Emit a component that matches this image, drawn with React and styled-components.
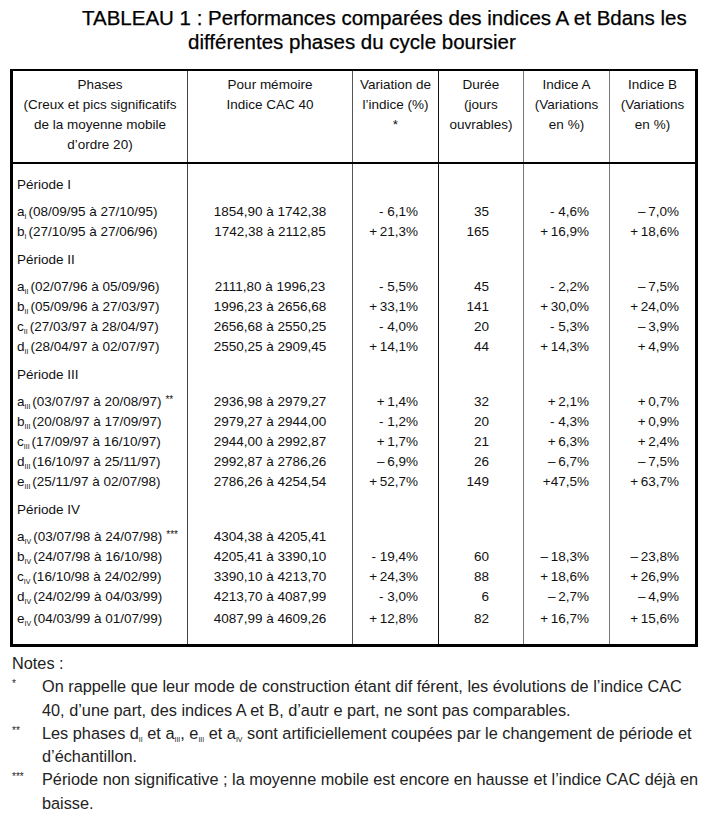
import React from "react";
import styled, { createGlobalStyle } from "styled-components";

const Global = createGlobalStyle`
  html, body { margin: 0; padding: 0; background: #fff; }
  body { font-family: "Liberation Sans", Arial, Helvetica, sans-serif; color: #111; }
`;

const Page = styled.div`
  width: 706px;
  box-sizing: border-box;
  padding: 6px 0 0 10px;
`;

const Title = styled.h1`
  margin: 0 0 15px 0;
  font-size: 20.5px;
  font-weight: normal;
  line-height: 24px;
  color: #000;
  white-space: nowrap;
  -webkit-text-stroke: 0.25px #000;
`;

const TitleLine = styled.span`
  display: block;
  margin-left: ${(p) => p.$indent}px;
`;

const Table = styled.table`
  width: 685px;
  table-layout: fixed;
  border-collapse: collapse;
  border-top: 2px solid #000;
  border-left: 3px solid #000;
  border-right: 3px solid #000;
  border-bottom: 3px solid #000;
  font-size: 13.5px;
  color: #111;
`;

const Col = styled.col`
  width: ${(p) => p.$w}px;
`;

const lineColors = ["#000", "#444", "#555", "#111", "#777", "#777"];

const Th = styled.th`
  font-weight: normal;
  text-align: center;
  vertical-align: top;
  line-height: 20px;
  padding: 4px 2px 7px;
  border-bottom: 2px solid #000;
  border-left: ${(p) => (p.$i === 0 ? "3px solid #000" : `1px solid ${lineColors[p.$i]}`)};
  white-space: nowrap;
`;

const Td = styled.td`
  height: ${(p) => (p.$last ? "auto" : "20px")};
  line-height: 20px;
  padding: ${(p) => (p.$last ? 2 : 0)}px ${(p) => p.$pr || 0}px ${(p) => (p.$last ? 15 : 0)}px ${(p) => p.$pl || 0}px;
  text-align: ${(p) => p.$align || "left"};
  border-left: ${(p) => (p.$i === 0 ? "3px solid #000" : `1px solid ${lineColors[p.$i]}`)};
  white-space: nowrap;
  vertical-align: top;
`;

const LabelTd = styled(Td)`
  height: auto;
  padding-top: ${(p) => (p.$first ? 11 : 8)}px;
  padding-bottom: 7px;
`;

const Sub = styled.span`
  font-size: 7px;
  line-height: 0;
  vertical-align: -3px;
  margin-right: 2px;
`;

const Star = styled.span`
  font-size: 10px;
  line-height: 0;
  vertical-align: 3px;
  margin-left: 4px;
`;

const Notes = styled.div`
  margin-top: 5px;
  font-size: 16.3px;
  line-height: 23.3px;
  color: #222;
  white-space: nowrap;
`;

const NotesHead = styled.div`
  padding-left: 2px;
`;

const NoteRow = styled.div`
  display: grid;
  grid-template-columns: 32px 1fr;
`;

const Mark = styled.span`
  font-size: 10px;
  line-height: 18px;
  padding-left: 2px;
`;

const NoteSub = styled.span`
  font-size: 7px;
  line-height: 0;
  vertical-align: -3px;
`;

const sections = [
  {
    label: "Période I",
    rows: [
      ["a", "I", "(08/09/95 à 27/10/95)", "", "1854,90 à 1742,38", "- 6,1%", "35", "- 4,6%", "–\u20097,0%"],
      ["b", "I", "(27/10/95 à 27/06/96)", "", "1742,38 à 2112,85", "+\u200921,3%", "165", "+\u200916,9%", "+\u200918,6%"],
    ],
  },
  {
    label: "Période II",
    rows: [
      ["a", "II", "(02/07/96 à 05/09/96)", "", "2111,80 à 1996,23", "- 5,5%", "45", "- 2,2%", "–\u20097,5%"],
      ["b", "II", "(05/09/96 à 27/03/97)", "", "1996,23 à 2656,68", "+\u200933,1%", "141", "+\u200930,0%", "+\u200924,0%"],
      ["c", "II", "(27/03/97 à 28/04/97)", "", "2656,68 à 2550,25", "- 4,0%", "20", "- 5,3%", "–\u20093,9%"],
      ["d", "II", "(28/04/97 à 02/07/97)", "", "2550,25 à 2909,45", "+\u200914,1%", "44", "+\u200914,3%", "+\u20094,9%"],
    ],
  },
  {
    label: "Période III",
    rows: [
      ["a", "III", "(03/07/97 à 20/08/97)", "**", "2936,98 à 2979,27", "+\u20091,4%", "32", "+\u20092,1%", "+\u20090,7%"],
      ["b", "III", "(20/08/97 à 17/09/97)", "", "2979,27 à 2944,00", "- 1,2%", "20", "- 4,3%", "+\u20090,9%"],
      ["c", "III", "(17/09/97 à 16/10/97)", "", "2944,00 à 2992,87", "+\u20091,7%", "21", "+\u20096,3%", "+\u20092,4%"],
      ["d", "III", "(16/10/97 à 25/11/97)", "", "2992,87 à 2786,26", "–\u20096,9%", "26", "–\u20096,7%", "–\u20097,5%"],
      ["e", "III", "(25/11/97 à 02/07/98)", "", "2786,26 à 4254,54", "+\u200952,7%", "149", "+47,5%", "+\u200963,7%"],
    ],
  },
  {
    label: "Période IV",
    rows: [
      ["a", "IV", "(03/07/98 à 24/07/98)", "***", "4304,38 à 4205,41", "", "", "", ""],
      ["b", "IV", "(24/07/98 à 16/10/98)", "", "4205,41 à 3390,10", "- 19,4%", "60", "–\u200918,3%", "–\u200923,8%"],
      ["c", "IV", "(16/10/98 à 24/02/99)", "", "3390,10 à 4213,70", "+\u200924,3%", "88", "+\u200918,6%", "+\u200926,9%"],
      ["d", "IV", "(24/02/99 à 04/03/99)", "", "4213,70 à 4087,99", "- 3,0%", "6", "–\u20092,7%", "–\u20094,9%"],
      ["e", "IV", "(04/03/99 à 01/07/99)", "", "4087,99 à 4609,26", "+\u200912,8%", "82", "+\u200916,7%", "+\u200915,6%"],
    ],
  },
];

const numPad = [20, 34, 20, 16];

function Section({ section, first, lastSection }) {
  return (
    <tbody>
      <tr>
        <LabelTd $i={0} $pl={4} $first={first}>{section.label}</LabelTd>
        {[1, 2, 3, 4, 5].map((i) => (
          <LabelTd key={i} $i={i} $first={first} />
        ))}
      </tr>
      {section.rows.map((r, idx) => {
        const last = lastSection && idx === section.rows.length - 1;
        return (
          <tr key={idx}>
            <Td $i={0} $pl={4} $last={last}>
              {r[0]}
              <Sub>{r[1]}</Sub>
              {r[2]}
              {r[3] && <Star>{r[3]}</Star>}
            </Td>
            <Td $i={1} $align="center" $last={last}>{r[4]}</Td>
            {[5, 6, 7, 8].map((k, j) => (
              <Td key={k} $i={j + 2} $align="right" $pr={numPad[j]} $last={last}>
                {r[k]}
              </Td>
            ))}
          </tr>
        );
      })}
    </tbody>
  );
}

export default function App() {
  return (
    <>
      <Global />
      <Page>
        <Title>
          <TitleLine $indent={72}>TABLEAU 1 : Performances comparées des indices A et Bdans les</TitleLine>
          <TitleLine $indent={178}>différentes phases du cycle boursier</TitleLine>
        </Title>
        <Table>
          <colgroup>
            <Col $w={176} />
            <Col $w={165} />
            <Col $w={86} />
            <Col $w={85} />
            <Col $w={86} />
            <Col $w={87} />
          </colgroup>
          <thead>
            <tr>
              <Th $i={0}>
                Phases
                <br />
                (Creux et pics significatifs
                <br />
                de la moyenne mobile
                <br />
                d’ordre 20)
              </Th>
              <Th $i={1}>
                Pour mémoire
                <br />
                Indice CAC 40
              </Th>
              <Th $i={2}>
                Variation de
                <br />
                l’indice (%)
                <br />*
              </Th>
              <Th $i={3}>
                Durée
                <br />
                (jours
                <br />
                ouvrables)
              </Th>
              <Th $i={4}>
                Indice A
                <br />
                (Variations
                <br />
                en %)
              </Th>
              <Th $i={5}>
                Indice B
                <br />
                (Variations
                <br />
                en %)
              </Th>
            </tr>
          </thead>
          {sections.map((s, i) => (
            <Section key={s.label} section={s} first={i === 0} lastSection={i === sections.length - 1} />
          ))}
        </Table>
        <Notes>
          <NotesHead>Notes :</NotesHead>
          <NoteRow>
            <Mark>*</Mark>
            <span>
              On rappelle que leur mode de construction étant dif férent, les évolutions de l’indice CAC
              <br />
              40, d’une part, des indices A et B, d’autr e part, ne sont pas comparables.
            </span>
          </NoteRow>
          <NoteRow>
            <Mark>**</Mark>
            <span>
              {" "}Les phases d<NoteSub>II</NoteSub> et a<NoteSub>III</NoteSub>, e<NoteSub>III</NoteSub> et a
              <NoteSub>IV</NoteSub> sont artificiellement coupées par le changement de période et
              <br />
              d’échantillon.
            </span>
          </NoteRow>
          <NoteRow>
            <Mark>***</Mark>
            <span>
              Période non significative ; la moyenne mobile est encore en hausse et l’indice CAC déjà en
              <br />
              baisse.
            </span>
          </NoteRow>
        </Notes>
      </Page>
    </>
  );
}
